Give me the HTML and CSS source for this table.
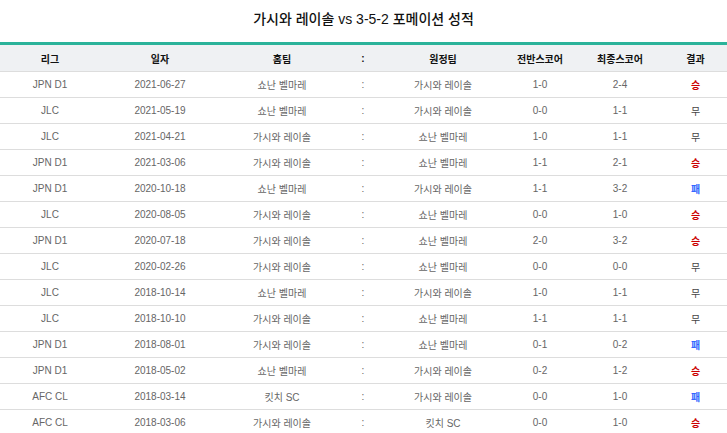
FILE: index.html
```html
<!DOCTYPE html>
<html>
<head>
<meta charset="utf-8">
<meta name="viewport" content="width=device-width, initial-scale=1.0">
<title>가시와 레이솔 vs 3-5-2 포메이션 성적</title>
<link rel="stylesheet" href="styles.css">
</head>
<body>

<div class="wrap">
    <h2 class="title">가시와 레이솔 vs 3-5-2 포메이션 성적</h2>
    <table class="record">
        <colgroup>
            <col style="width:100px">
            <col style="width:120px">
            <col style="width:124px">
            <col style="width:38px">
            <col style="width:122px">
            <col style="width:72px">
            <col style="width:88px">
            <col>
        </colgroup>
        <thead>
            <tr>
                <th>리그</th>
                <th>일자</th>
                <th>홈팀</th>
                <th>:</th>
                <th>원정팀</th>
                <th>전반스코어</th>
                <th>최종스코어</th>
                <th>결과</th>
            </tr>
        </thead>
        <tbody>
            <tr><td>JPN D1</td><td>2021-06-27</td><td>쇼난 벨마레</td><td>:</td><td>가시와 레이솔</td><td>1-0</td><td>2-4</td><td class="win">승</td></tr>
            <tr><td>JLC</td><td>2021-05-19</td><td>쇼난 벨마레</td><td>:</td><td>가시와 레이솔</td><td>0-0</td><td>1-1</td><td class="draw">무</td></tr>
            <tr><td>JLC</td><td>2021-04-21</td><td>가시와 레이솔</td><td>:</td><td>쇼난 벨마레</td><td>1-0</td><td>1-1</td><td class="draw">무</td></tr>
            <tr><td>JPN D1</td><td>2021-03-06</td><td>가시와 레이솔</td><td>:</td><td>쇼난 벨마레</td><td>1-1</td><td>2-1</td><td class="win">승</td></tr>
            <tr><td>JPN D1</td><td>2020-10-18</td><td>쇼난 벨마레</td><td>:</td><td>가시와 레이솔</td><td>1-1</td><td>3-2</td><td class="lose">패</td></tr>
            <tr><td>JLC</td><td>2020-08-05</td><td>가시와 레이솔</td><td>:</td><td>쇼난 벨마레</td><td>0-0</td><td>1-0</td><td class="win">승</td></tr>
            <tr><td>JPN D1</td><td>2020-07-18</td><td>가시와 레이솔</td><td>:</td><td>쇼난 벨마레</td><td>2-0</td><td>3-2</td><td class="win">승</td></tr>
            <tr><td>JLC</td><td>2020-02-26</td><td>가시와 레이솔</td><td>:</td><td>쇼난 벨마레</td><td>0-0</td><td>0-0</td><td class="draw">무</td></tr>
            <tr><td>JLC</td><td>2018-10-14</td><td>쇼난 벨마레</td><td>:</td><td>가시와 레이솔</td><td>1-0</td><td>1-1</td><td class="draw">무</td></tr>
            <tr><td>JLC</td><td>2018-10-10</td><td>가시와 레이솔</td><td>:</td><td>쇼난 벨마레</td><td>1-1</td><td>1-1</td><td class="draw">무</td></tr>
            <tr><td>JPN D1</td><td>2018-08-01</td><td>가시와 레이솔</td><td>:</td><td>쇼난 벨마레</td><td>0-1</td><td>0-2</td><td class="lose">패</td></tr>
            <tr><td>JPN D1</td><td>2018-05-02</td><td>쇼난 벨마레</td><td>:</td><td>가시와 레이솔</td><td>0-2</td><td>1-2</td><td class="win">승</td></tr>
            <tr><td>AFC CL</td><td>2018-03-14</td><td>킷치 SC</td><td>:</td><td>가시와 레이솔</td><td>0-0</td><td>1-0</td><td class="lose">패</td></tr>
            <tr><td>AFC CL</td><td>2018-03-06</td><td>가시와 레이솔</td><td>:</td><td>킷치 SC</td><td>0-0</td><td>1-0</td><td class="win">승</td></tr>
        </tbody>
    </table>
</div>

</body>
</html>
```

FILE: styles.css
```css
body {
    margin: 0;
    font-family: "Liberation Sans", "Noto Sans CJK KR", sans-serif;
    background-color: #fff;
}
.wrap {
    width: 727px;
}
.title {
    margin: 0;
    height: 42px;
    line-height: 38px;
    text-align: center;
    font-size: 14px;
    font-weight: 500;
    color: #111;
}
.record {
    width: 100%;
    border-collapse: collapse;
    table-layout: fixed;
    border-top: 3px solid #2bb39a;
}
.record th {
    height: 26px;
    padding: 0;
    background-color: #eff1f3;
    border-bottom: 1px solid #dddddd;
    font-size: 10px;
    font-weight: bold;
    color: #111;
    text-align: center;
}
.record td {
    height: 25px;
    padding: 0;
    border-bottom: 1px solid #dddddd;
    font-size: 10px;
    color: #666;
    text-align: center;
}
.record td.win {
    color: #cc0000;
    font-weight: bold;
}
.record td.lose {
    color: #3366ff;
    font-weight: bold;
}
.record td.draw {
    color: #444;
}
```
